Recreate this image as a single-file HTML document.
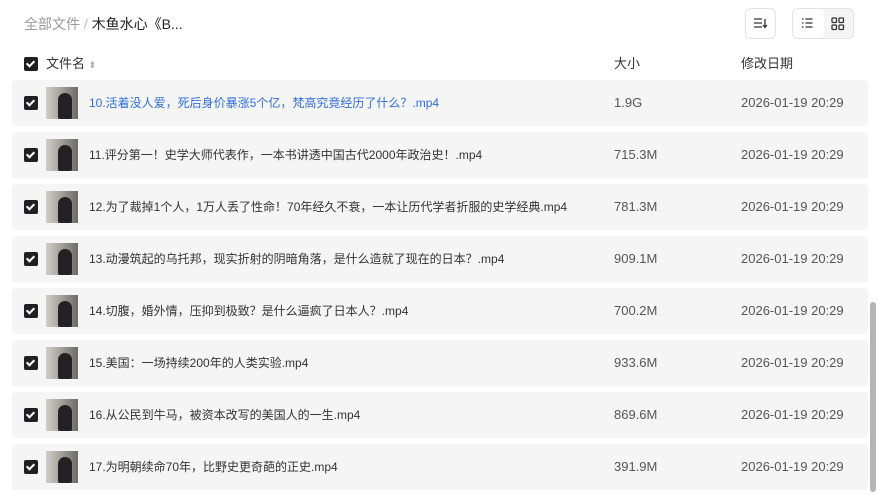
<!DOCTYPE html>
<html><head><meta charset="utf-8"><style>
*{margin:0;padding:0;box-sizing:border-box}
body{width:878px;height:495px;overflow:hidden;background:#fff;font-family:"Liberation Sans","Noto Sans CJK SC",sans-serif;color:#333;position:relative}
.bc{position:absolute;left:24px;top:12px;line-height:24px;font-size:14px;color:#999}
.bc b{font-weight:normal;color:#222}
.btn{position:absolute;top:8px;height:31px;border:1px solid #e3e3e3;border-radius:6px;background:#fff}
.cb{position:absolute;left:24px;width:14px;height:14px;background:#1f1f24;border-radius:2px}
.cb:after{content:"";position:absolute;left:4px;top:2px;width:3px;height:6px;border:solid #fff;border-width:0 2px 2px 0;transform:rotate(45deg)}
.hd{position:absolute;top:52px;line-height:24px;font-size:13px;color:#333}
.row{position:absolute;left:12px;width:856px;height:46px;background:#f5f5f6;border-radius:4px}
.row .cb{left:12px;top:16px}
.th{position:absolute;left:34px;top:7px;width:32px;height:32px;background:linear-gradient(90deg,#cfcfc8 0%,#a9a9a2 40%,#6c6a66 100%)}
.th:after{content:"";position:absolute;left:12px;top:6px;width:14px;height:26px;background:#222;border-radius:7px 7px 2px 2px}
.nm{position:absolute;left:77px;top:0;line-height:46px;font-size:12px;color:#333;white-space:nowrap}
.sz{position:absolute;left:602px;top:0;line-height:46px;font-size:13px;color:#555}
.dt{position:absolute;left:729px;top:0;line-height:46px;font-size:13px;color:#555}
.sb{position:absolute;left:870px;top:302px;width:6px;height:190px;background:#b5b5b8;border-radius:3px}
</style></head><body>
<div class="bc">全部文件 <span style="color:#bbb">/</span> <b>木鱼水心《B...</b></div>
<div class="btn" style="left:745px;width:31px">
<svg width="31" height="31" viewBox="0 0 31 31" style="position:absolute;left:-1px;top:-1px"><g stroke="#333" stroke-width="1.3" fill="none"><path d="M9 11h8M9 15h8M9 19h8M20 11v8M18 17l2 2.5 2-2.5"/></g></svg>
</div>
<div class="btn" style="left:792px;width:62px;background:#f5f5f5">
<div style="position:absolute;left:0;top:0;width:31px;height:29px;background:#fff;border-radius:5px"></div>
<svg width="62" height="31" viewBox="0 0 62 31" style="position:absolute;left:-1px;top:-1px"><g stroke="#333" stroke-width="1.3" fill="none"><path d="M10 11h1.5M10 15h1.5M10 19h1.5M13.5 11h7M13.5 15h7M13.5 19h7"/><rect x="40" y="10" width="4.5" height="4.5" rx="1"/><rect x="47" y="10" width="4.5" height="4.5" rx="1"/><rect x="40" y="17" width="4.5" height="4.5" rx="1"/><rect x="47" y="17" width="4.5" height="4.5" rx="1"/></g></svg>
</div>
<div class="cb" style="top:57px"></div>
<div class="hd" style="left:46px">文件名 <span style="font-size:9px;color:#aaa">⬍</span></div>
<div class="hd" style="left:614px">大小</div>
<div class="hd" style="left:741px">修改日期</div>

<div class="row" style="top:80px"><div class="cb"></div><div class="th"></div><div class="nm" style="color:#2f6fde">10.活着没人爱，死后身价暴涨5个亿，梵高究竟经历了什么？.mp4</div><div class="sz">1.9G</div><div class="dt">2026-01-19 20:29</div></div>
<div class="row" style="top:132px"><div class="cb"></div><div class="th"></div><div class="nm">11.评分第一！史学大师代表作，一本书讲透中国古代2000年政治史！.mp4</div><div class="sz">715.3M</div><div class="dt">2026-01-19 20:29</div></div>
<div class="row" style="top:184px"><div class="cb"></div><div class="th"></div><div class="nm">12.为了裁掉1个人，1万人丢了性命！70年经久不衰，一本让历代学者折服的史学经典.mp4</div><div class="sz">781.3M</div><div class="dt">2026-01-19 20:29</div></div>
<div class="row" style="top:236px"><div class="cb"></div><div class="th"></div><div class="nm">13.动漫筑起的乌托邦，现实折射的阴暗角落，是什么造就了现在的日本？.mp4</div><div class="sz">909.1M</div><div class="dt">2026-01-19 20:29</div></div>
<div class="row" style="top:288px"><div class="cb"></div><div class="th"></div><div class="nm">14.切腹，婚外情，压抑到极致？是什么逼疯了日本人？.mp4</div><div class="sz">700.2M</div><div class="dt">2026-01-19 20:29</div></div>
<div class="row" style="top:340px"><div class="cb"></div><div class="th"></div><div class="nm">15.美国：一场持续200年的人类实验.mp4</div><div class="sz">933.6M</div><div class="dt">2026-01-19 20:29</div></div>
<div class="row" style="top:392px"><div class="cb"></div><div class="th"></div><div class="nm">16.从公民到牛马，被资本改写的美国人的一生.mp4</div><div class="sz">869.6M</div><div class="dt">2026-01-19 20:29</div></div>
<div class="row" style="top:444px"><div class="cb"></div><div class="th"></div><div class="nm">17.为明朝续命70年，比野史更奇葩的正史.mp4</div><div class="sz">391.9M</div><div class="dt">2026-01-19 20:29</div></div>
<div class="sb"></div>
</body></html>
